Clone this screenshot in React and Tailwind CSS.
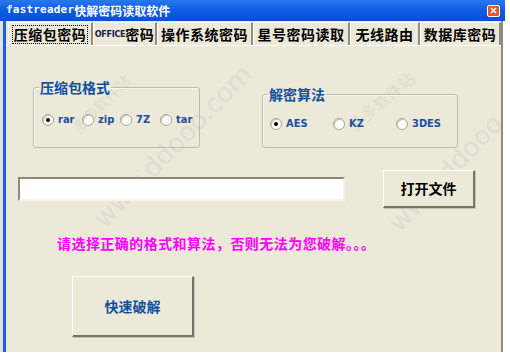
import React from 'react';

const cjk = "font-['Noto_Sans_CJK_SC',sans-serif]";
const cond = "font-['DejaVu_Sans_Condensed','DejaVu_Sans',sans-serif]";

const tabs = [
  { label: '压缩包密码', w: 'w-[85px]', active: true },
  { label: '密码', prefix: 'OFFICE', w: 'w-[64px]' },
  { label: '操作系统密码', w: 'w-[96px]' },
  { label: '星号密码读取', w: 'w-[97px]' },
  { label: '无线路由', w: 'w-[70px]' },
  { label: '数据库密码', w: 'w-[81px]' },
];

function Radio({ checked }) {
  return (
    <span className="relative w-[12px] h-[12px] rounded-full bg-white border border-[#a8a69a] shadow-[inset_1px_1px_1px_#c8c6ba] shrink-0 flex items-center justify-center">
      {checked && <span className="w-[4px] h-[4px] rounded-full bg-black" />}
    </span>
  );
}

function RadioItem({ label, checked, w }) {
  return (
    <div className={`${w} flex items-center gap-[4px] shrink-0`}>
      <Radio checked={checked} />
      <span className={`${cond} text-[11px] font-bold text-[#1c4f9c] leading-[14px]`}>{label}</span>
    </div>
  );
}

export default function App() {
  return (
    <div className="w-[510px] h-[358px] bg-white overflow-hidden">
      {/* title bar */}
      <div className="w-[505px] h-[21px] bg-gradient-to-b from-[#2a78ef] via-[#0a5ce6] to-[#0650d8] flex items-center justify-between pl-[6px] pr-[5px]">
        <div className="flex items-center text-white font-bold">
          <span className="font-['DejaVu_Sans_Mono',monospace] text-[11px] tracking-[0.2px]">fastreader</span>
          <span className={`${cjk} text-[12px] leading-[14px]`}>快解密码读取软件</span>
        </div>
        <div className="w-[13px] h-[12px] rounded-[2px] bg-[#e2572a] border border-white flex items-center justify-center">
          <svg width="7" height="7" viewBox="0 0 7 7">
            <path d="M1 1 L6 6 M6 1 L1 6" stroke="white" strokeWidth="1.6" />
          </svg>
        </div>
      </div>

      <div className="flex h-[331px]">
        <div className="w-[3px] bg-[#dfe3ee]" />
        <div className="w-[3px] bg-[#1860e8]" />
        <div className="relative w-[495px] bg-[#ECE9D8] flex flex-col overflow-hidden">
          {/* watermark */}
          <span className={`${cjk} pointer-events-none absolute left-[58px] top-[72px] -rotate-45 text-[15px] text-[#dfdbcd]`}>多多软件站</span>
          <span className={`${cjk} pointer-events-none absolute left-[335px] top-[68px] -rotate-[40deg] text-[16px] text-[#dfdbcd]`}>多多软件站</span>
          <span className="pointer-events-none absolute left-[60px] top-[106px] -rotate-[46deg] font-['DejaVu_Sans',sans-serif] text-[26px] text-[#e0dccf]">www.ddooo.com</span>
          <span className="pointer-events-none absolute left-[355px] top-[110px] -rotate-[46deg] font-['DejaVu_Sans',sans-serif] text-[26px] text-[#e0dccf]">www.ddooo.com</span>

          {/* tabs */}
          <div className="relative flex pl-[2px] mt-[1px] h-[23px]">
            {tabs.map((t, i) => (
              <div
                key={i}
                className={`${t.w} h-[23px] border-t border-l border-white border-r-2 border-r-[#8f8c80] flex items-center justify-center`}
              >
                <div className={`flex items-center whitespace-nowrap px-[1px] h-[19px] ${t.active ? 'border border-dotted border-black' : ''}`}>
                  {t.prefix && (
                    <span className={`${cond} text-[9px] font-bold text-[#1a1a50] leading-[12px] tracking-[-0.3px]`}>{t.prefix}</span>
                  )}
                  <span className={`${cjk} text-[14px] font-bold text-black tracking-[0.5px] leading-[16px]`}>{t.label}</span>
                </div>
              </div>
            ))}
          </div>

          {/* panel */}
          <div className="relative flex-1 flex flex-col border-t border-white">
            <div className="flex items-start mt-[33px]">
              <fieldset className="ml-[27px] w-[167px] h-[69px] border border-[#bfbcab] rounded-[3px] shadow-[inset_1px_1px_0_#f8f7f1]">
                <legend className={`${cjk} ml-[5px] px-[1px] text-[14px] font-bold text-[#0f4f9e] leading-[16px]`}>压缩包格式</legend>
                <div className="flex items-center ml-[8px] mt-[18px]">
                  <RadioItem label="rar" checked w="w-[40px]" />
                  <RadioItem label="zip" w="w-[38px]" />
                  <RadioItem label="7Z" w="w-[40px]" />
                  <RadioItem label="tar" w="w-[34px]" />
                </div>
              </fieldset>

              <fieldset className="ml-[62px] mt-[7px] w-[196px] h-[62px] border border-[#bfbcab] rounded-[3px] shadow-[inset_1px_1px_0_#f8f7f1]">
                <legend className={`${cjk} ml-[5px] px-[1px] text-[14px] font-bold text-[#0f4f9e] leading-[16px]`}>解密算法</legend>
                <div className="flex items-center ml-[7px] mt-[15px]">
                  <RadioItem label="AES" checked w="w-[63px]" />
                  <RadioItem label="KZ" w="w-[63px]" />
                  <RadioItem label="3DES" w="w-[50px]" />
                </div>
              </fieldset>
            </div>

            <div className="flex items-center mt-[22px]">
              <div className="ml-[12px] w-[327px] h-[24px] bg-white border-2 border-t-[#8c897c] border-l-[#8c897c] border-b-[#f4f3ec] border-r-[#f4f3ec]" />
              <button className={`${cjk} ml-[38px] w-[92px] h-[38px] bg-[#ECE9D8] border-t border-l border-white border-b-2 border-r-2 border-b-[#77756a] border-r-[#77756a] shadow-[1px_1px_0_#c7c4b6] text-[14px] font-bold text-black`}>
                打开文件
              </button>
            </div>

            <p className={`${cjk} ml-[51px] mt-[25px] text-[14px] font-bold text-[#ff00ff] tracking-[0.45px] leading-[20px]`}>
              请选择正确的格式和算法，否则无法为您破解。。。
            </p>

            <button className={`${cjk} ml-[66px] mt-[23px] w-[122px] h-[61px] bg-[#ECE9D8] border-t border-l border-white border-b-2 border-r-2 border-b-[#77756a] border-r-[#77756a] shadow-[1px_1px_0_#c7c4b6] text-[14px] font-bold text-[#0f4f9e]`}>
              快速破解
            </button>
          </div>
        </div>
        <div className="w-[2px] bg-[#8f8c80]" />
      </div>
    </div>
  );
}
